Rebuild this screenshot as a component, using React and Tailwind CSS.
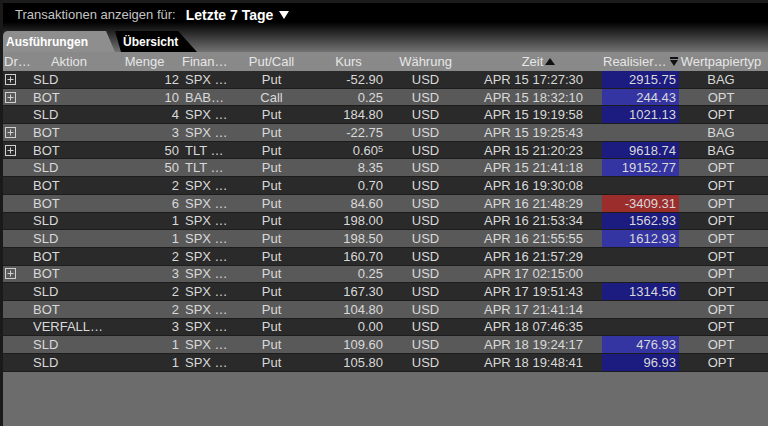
import React from 'react'

const rows = [
  { exp: true, act: 'SLD', qty: '12', fin: 'SPX …', pc: 'Put', kurs: '-52.90', time: 'APR 15 17:27:30', pnl: '2915.75', typ: 'BAG' },
  { exp: true, act: 'BOT', qty: '10', fin: 'BAB…', pc: 'Call', kurs: '0.25', time: 'APR 15 18:32:10', pnl: '244.43', typ: 'OPT' },
  { act: 'SLD', qty: '4', fin: 'SPX …', pc: 'Put', kurs: '184.80', time: 'APR 15 19:19:58', pnl: '1021.13', typ: 'OPT' },
  { exp: true, act: 'BOT', qty: '3', fin: 'SPX …', pc: 'Put', kurs: '-22.75', time: 'APR 15 19:25:43', typ: 'BAG' },
  { exp: true, act: 'BOT', qty: '50', fin: 'TLT …', pc: 'Put', kurs: '0.60', sup: '5', time: 'APR 15 21:20:23', pnl: '9618.74', typ: 'BAG' },
  { act: 'SLD', qty: '50', fin: 'TLT …', pc: 'Put', kurs: '8.35', time: 'APR 15 21:41:18', pnl: '19152.77', typ: 'OPT' },
  { act: 'BOT', qty: '2', fin: 'SPX …', pc: 'Put', kurs: '0.70', time: 'APR 16 19:30:08', typ: 'OPT' },
  { act: 'BOT', qty: '6', fin: 'SPX …', pc: 'Put', kurs: '84.60', time: 'APR 16 21:48:29', pnl: '-3409.31', loss: true, typ: 'OPT' },
  { act: 'SLD', qty: '1', fin: 'SPX …', pc: 'Put', kurs: '198.00', time: 'APR 16 21:53:34', pnl: '1562.93', typ: 'OPT' },
  { act: 'SLD', qty: '1', fin: 'SPX …', pc: 'Put', kurs: '198.50', time: 'APR 16 21:55:55', pnl: '1612.93', typ: 'OPT' },
  { act: 'BOT', qty: '2', fin: 'SPX …', pc: 'Put', kurs: '160.70', time: 'APR 16 21:57:29', typ: 'OPT' },
  { exp: true, act: 'BOT', qty: '3', fin: 'SPX …', pc: 'Put', kurs: '0.25', time: 'APR 17 02:15:00', typ: 'OPT' },
  { act: 'SLD', qty: '2', fin: 'SPX …', pc: 'Put', kurs: '167.30', time: 'APR 17 19:51:43', pnl: '1314.56', typ: 'OPT' },
  { act: 'BOT', qty: '2', fin: 'SPX …', pc: 'Put', kurs: '104.80', time: 'APR 17 21:41:14', typ: 'OPT' },
  { act: 'VERFALL…', qty: '3', fin: 'SPX …', pc: 'Put', kurs: '0.00', time: 'APR 18 07:46:35', typ: 'OPT' },
  { act: 'SLD', qty: '1', fin: 'SPX …', pc: 'Put', kurs: '109.60', time: 'APR 18 19:24:17', pnl: '476.93', typ: 'OPT' },
  { act: 'SLD', qty: '1', fin: 'SPX …', pc: 'Put', kurs: '105.80', time: 'APR 18 19:48:41', pnl: '96.93', typ: 'OPT' },
]

const cols = 'grid grid-cols-[27px_78px_73px_51px_79px_75px_79px_137px_77px_84px_1fr]'

function ExpandIcon() {
  return (
    <svg width="11" height="11" viewBox="0 0 11 11" className="ml-[2px]">
      <rect x="0.5" y="0.5" width="10" height="10" fill="none" stroke="#d0d0d0" />
      <path d="M5.5 2.5v6M2.5 5.5h6" stroke="#d0d0d0" />
    </svg>
  )
}

function SortDown() {
  return (
    <svg width="8" height="9" viewBox="0 0 8 9" className="ml-[3px]">
      <rect x="0" y="0" width="8" height="2" fill="#111" />
      <path d="M0 3h8L4 9z" fill="#111" />
    </svg>
  )
}

export default function App() {
  return (
    <div className="w-[768px] h-[426px] overflow-hidden flex flex-col bg-[#6c6c6c] text-[13px] font-['Liberation_Sans',Arial,sans-serif] border-l-[3px] border-[#1a1a1a]">
      {/* top bar + tabs */}
      <div className="h-[52px] flex flex-col bg-[linear-gradient(to_bottom,#1c1c1c_0px,#1c1c1c_3px,#000_3px,#000_22px,#727272_52px)]">
        <div className="h-[29px] flex items-center pl-[12px] pt-[1px]">
          <span className="text-[#c4c4c4]">Transaktionen anzeigen für:</span>
          <span className="ml-[10px] text-white font-bold text-[14px] flex items-center">
            Letzte 7 Tage
            <svg width="10" height="8" viewBox="0 0 10 8" className="ml-[6px]">
              <path d="M0 0h10L5 8z" fill="#fff" />
            </svg>
          </span>
        </div>
        <div className="flex items-end h-[23px]">
          <div className="relative z-10 w-[112px] h-[21px] bg-[#8e8e8e] rounded-tl-[5px] [clip-path:polygon(0_0,92%_0,100%_100%,0_100%)] flex items-center pl-[3px] pt-[1px] text-white font-bold text-[12px]">
            Ausführungen
          </div>
          <div className="-ml-[4px] w-[86px] h-[21px] bg-black rounded-tl-[6px] rounded-tr-[6px] [clip-path:polygon(4px_0,78%_0,100%_100%,10px_100%)] flex items-center pl-[12px] pt-[1px] text-white font-bold text-[12px]">
            Übersicht
          </div>
        </div>
      </div>

      {/* header */}
      <div className={`${cols} h-[19px] items-center bg-[#898989] text-[#e6e6e6] leading-none`}>
        <div className="pl-[1px] whitespace-nowrap">Dr…</div>
        <div className="text-center">Aktion</div>
        <div className="text-center">Menge</div>
        <div className="pl-[1px] whitespace-nowrap">Finan…</div>
        <div className="text-center">Put/Call</div>
        <div className="text-center">Kurs</div>
        <div className="text-center">Währung</div>
        <div className="flex items-center justify-center pl-[10px]">
          Zeit
          <svg width="10" height="7" viewBox="0 0 10 7" className="ml-[2px]">
            <path d="M0 7h10L5 0z" fill="#111" />
          </svg>
        </div>
        <div className="flex items-center whitespace-nowrap pl-[1px]">
          Realisier…
          <SortDown />
        </div>
        <div className="text-center whitespace-nowrap">Wertpapiertyp</div>
        <div />
      </div>

      {/* rows */}
      <div className="flex flex-col">
        {rows.map((r, i) => {
          const light = i % 2 === 1
          const cellBg = r.pnl
            ? r.loss
              ? 'bg-[#9b2d2d]'
              : light
                ? 'bg-[#3434a2]'
                : 'bg-[#1b1b80]'
            : ''
          return (
            <div
              key={i}
              className={`${cols} h-[17.7px] items-stretch text-[#d9d9d9] leading-none border-b border-[#1c1c1c] ${light ? 'bg-[#595959]' : 'bg-[#2a2a2a]'}`}
            >
              <div className="flex items-center">{r.exp && <ExpandIcon />}</div>
              <div className="flex items-center pl-[3px] whitespace-nowrap">{r.act}</div>
              <div className="flex items-center justify-end pr-[2px]">{r.qty}</div>
              <div className="flex items-center pl-[4px] whitespace-nowrap">{r.fin}</div>
              <div className="flex items-center justify-center">{r.pc}</div>
              <div className="flex items-center justify-end pr-[3px]">
                {r.kurs}
                {r.sup && <span className="text-[9px] self-start mt-[3px]">{r.sup}</span>}
              </div>
              <div className="flex items-center justify-center">USD</div>
              <div className="flex items-center justify-center">{r.time}</div>
              <div className={`flex items-center justify-end pr-[3px] ${cellBg}`}>{r.pnl}</div>
              <div className="flex items-center justify-center">{r.typ}</div>
              <div />
            </div>
          )
        })}
      </div>
    </div>
  )
}
